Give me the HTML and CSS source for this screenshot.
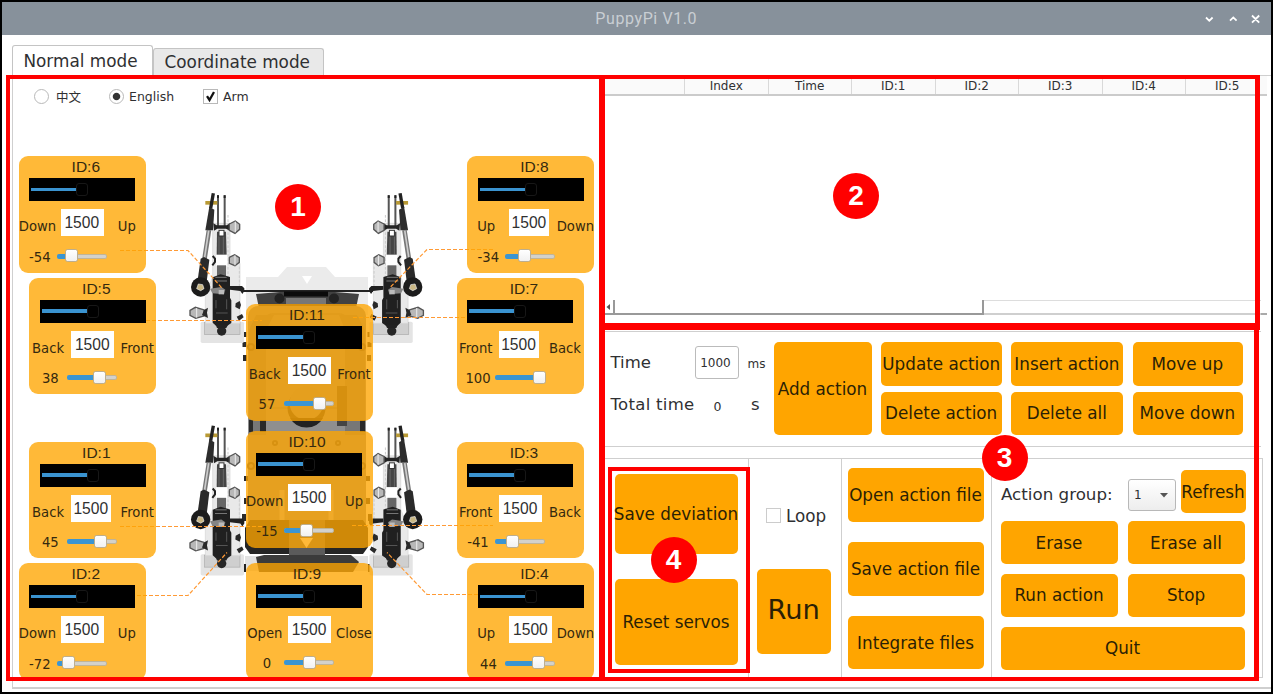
FILE: index.html
```html
<!DOCTYPE html>
<html lang="en">
<head>
<meta charset="utf-8">
<title>PuppyPi V1.0</title>
<link rel="stylesheet" href="styles.css">
</head>
<body>
<div class="window">
  <header class="titlebar">
    <span class="title">PuppyPi V1.0</span>
    <svg class="controls" width="60" height="14" viewBox="0 0 60 14">
      <path d="M4 5.5l3.3 3.3 3.3-3.3M28 8.7l3.3-3.3 3.3 3.3M50 3.500l7.200 7.200M57.200 3.500L50 10.700"/>
    </svg>
  </header>
  <nav class="tabs">
    <div class="tab active">Normal mode</div>
    <div class="tab">Coordinate mode</div>
  </nav>
  <main class="pane">
    <section class="canvas">
      <svg class="robot" width="588" height="601" viewBox="13 76 588 601">
        <defs>
          <g id="leg">
            <rect x="62" y="425" width="130" height="64" rx="5" fill="#e4e4e4"/>
            <rect x="74" y="428" width="106" height="36" fill="#cfcfcf" stroke="#aaa" stroke-width="2"/>
            <path d="M98 130h52v120h30v180H76V350l22-60z" fill="#e9e9e9" stroke="#d5d5d5" stroke-width="2"/>
            <path d="M144 105v185M178 260v60" stroke="#ccc" stroke-width="3" stroke-dasharray="8 5"/>
            <path d="M114 46v95M134 46v95" stroke="#555" stroke-width="6"/>
            <path d="M114 46v8M134 46v8" stroke="#222" stroke-width="6"/>
            <rect x="76" y="63" width="36" height="11" fill="#b99a35"/>
            <path d="M100 40l-8 45" stroke="#222" stroke-width="10"/>
            <path d="M88 80l15 9-4 62H76z" fill="#2d2d2d"/>
            <path d="M87 150l-14 90" stroke="#777" stroke-width="14"/>
            <path d="M86 152l-13 86" stroke="#ccc" stroke-width="5"/>
            <path d="M111 155h27l2 70h-30z" fill="#454545"/>
            <path d="M117 157v66M130 157v66" stroke="#777" stroke-width="2"/>
            <rect x="108" y="224" width="34" height="33" fill="#fff"/>
            <rect x="111" y="256" width="27" height="36" fill="#666"/>
            <path d="M100 130l10 6h30l10-6v22l-12-6h-26l-10 6z" fill="#242424"/>
            <rect x="117" y="151" width="15" height="17" fill="#fff" stroke="#333" stroke-width="3"/>
            <g fill="#b8b8b8" stroke="#555" stroke-width="4">
              <path d="M148 132l18-9 13 10v15l-14 12-17-9z"/>
              <path d="M148 232l16-8 14 9v14l-13 10-17-7z"/>
              <path d="M72 390l-26-8-16 9v15l17 9 25-7z"/>
            </g>
            <path d="M166 125v32M165 226v30M50 384v29" stroke="#eee" stroke-width="3"/>
            <path d="M98 228l7 8v10l-8 10" fill="none" stroke="#222" stroke-width="6"/>
            <path d="M62 236l10-5 16 8-9 75H51z" fill="#2a2a2a"/>
            <path d="M98 292l24-9 28 8v62l4 8v68l-12 8h-34l-10-9z" fill="#202020"/>
            <path d="M106 292h34M105 303h36" stroke="#777" stroke-width="3"/>
            <path d="M90 326l34-5 12 8-4 14-35-3z" fill="#858585"/>
            <path d="M116 330h16v13h-16z" fill="#bbb"/>
            <path d="M108 360v25M140 358v30M108 399h35" stroke="#555" stroke-width="3"/>
            <circle cx="62" cy="321" r="29" fill="#1c1c1c"/>
            <path d="M55 312l13 2 4 12-10 6-12-6z" fill="#c9b784" stroke="#eee" stroke-width="2"/>
            <path d="M150 318h36l7 7v8l-6 9-6-9-31-4z" fill="#202020"/>
            <path d="M72 390l12-7-3 15 3 16-18-9zM167 370l12-7 4 12-4 13-13-7zM170 410l16-8 5 10-14 10z" fill="#292929"/>
            <circle cx="125" cy="453" r="14" fill="#262626"/>
            <path d="M107 434h37l-5 10h-28z" fill="#222"/>
          </g>
        </defs>
        <!-- chassis -->
        <path d="M246 277h32l9-10h39l9 10h33v38H246z" fill="#ebebeb"/>
        <path d="M302 276h10l-5 8z" fill="#fff"/>
        <path d="M241 291h132" stroke="#222" stroke-width="2.200"/>
        <path d="M256 294l3 14h97l3-14-24-2h-55z" fill="#414141"/>
        <path d="M284 294h44" stroke="#0b0b0b" stroke-width="5"/>
        <path d="M286 301h40" stroke="#777" stroke-width="6"/>
        <circle cx="279.500" cy="298.500" r="5" fill="#222"/><circle cx="334" cy="298.500" r="5" fill="#222"/>
        <rect x="248" y="306" width="118" height="230" rx="10" fill="#8f8f8f"/>
        <path d="M249 330v105h17V330l8-15h-18zM345 330v105h20V330l-8-15h-18z" fill="#777"/>
        <path d="M249 420h4v12h-4zM260 420h6v12h-6zM360 420h5v12h-5z" fill="#292929"/>
        <path d="M244.500 332v5M369.500 332v5M244.500 342v5M369.500 342v5M245 355v6M369 355v6M246 476v5M368 476v5M246 498v6M368 498v6M244 514v7M370 514v7" stroke="#2b2b2b" stroke-width="4"/>
        <rect x="265" y="314" width="82" height="94" rx="7" fill="none" stroke="#777" stroke-width="1.500"/>
        <circle cx="306.500" cy="408" r="19" fill="#333"/>
        <circle cx="306.500" cy="403" r="17" fill="#8a8a8a"/>
        <path d="M290 418a19 19 0 0 0 33 0z" fill="#222"/>
        <path d="M337 386h10v40h-10z" fill="#444"/>
        <path d="M282 490v33M331 490v33" stroke="#bbb" stroke-width="5"/>
        <g fill="none" stroke="#4b4b4b" stroke-width="2">
          <circle cx="275" cy="443" r="2"/><circle cx="338" cy="443" r="2"/>
          <circle cx="251" cy="347" r="3"/><circle cx="362" cy="347" r="3"/>
          <circle cx="251" cy="466" r="3"/><circle cx="362" cy="466" r="3"/>
        </g>
        <rect x="245" y="556" width="123" height="15" fill="#e1e1e1"/>
        <path d="M250 520h113l5 8v19l-5 7H250l-5-7v-19z" fill="#252525"/>
        <path d="M289 520h36v40h-36z" fill="#5b5b5b"/>
        <path d="M256 557l8-2h87l8 7-6 10h-94z" fill="#3b3b3b"/>
        <path d="M300 538h13l-6.500 10z" fill="#fff"/>
        <path d="M244 564v8M370 564v8" stroke="#222" stroke-width="4"/>
        <!-- legs -->
        <use href="#leg" transform="translate(180 180) scale(.3333)"/>
        <use href="#leg" transform="translate(433.400 180) scale(-.3333 .3333)"/>
        <use href="#leg" transform="translate(180 412.500) scale(.3333)"/>
        <use href="#leg" transform="translate(433.400 412.500) scale(-.3333 .3333)"/>
        <g class="leader">
          <path d="M120 250.500h68l34 37.500M493 249.500h-66l-37 38"/>
          <path d="M146 320.500h116M353 317.500h115M120 526.500h142M352 525.500h141"/>
          <path d="M137 595.500h51l39-43M478 594.500h-51l-40-42"/>
        </g>
      </svg>

      <article class="servo s6"><h3>ID:6</h3><div class="bar"><i></i><b></b></div>
        <div class="range"><span>Down</span><div class="value">1500</div><span>Up</span></div>
        <div class="dev"><span>-54</span><div class="slider" style="--v:-54"><i></i><b></b></div></div></article>
      <article class="servo s5"><h3>ID:5</h3><div class="bar"><i></i><b></b></div>
        <div class="range"><span>Back</span><div class="value">1500</div><span>Front</span></div>
        <div class="dev"><span>38</span><div class="slider" style="--v:38"><i></i><b></b></div></div></article>
      <article class="servo s1"><h3>ID:1</h3><div class="bar"><i></i><b></b></div>
        <div class="range"><span>Back</span><div class="value narrow">1500</div><span>Front</span></div>
        <div class="dev"><span>45</span><div class="slider" style="--v:45"><i></i><b></b></div></div></article>
      <article class="servo s2"><h3>ID:2</h3><div class="bar"><i></i><b></b></div>
        <div class="range"><span>Down</span><div class="value">1500</div><span>Up</span></div>
        <div class="dev"><span>-72</span><div class="slider" style="--v:-70"><i></i><b></b></div></div></article>
      <article class="servo s8"><h3>ID:8</h3><div class="bar"><i></i><b></b></div>
        <div class="range"><span>Up</span><div class="value narrow">1500</div><span>Down</span></div>
        <div class="dev"><span>-34</span><div class="slider" style="--v:-30"><i></i><b></b></div></div></article>
      <article class="servo s7"><h3>ID:7</h3><div class="bar"><i></i><b></b></div>
        <div class="range"><span>Front</span><div class="value narrow">1500</div><span>Back</span></div>
        <div class="dev"><span>100</span><div class="slider" style="--v:100"><i></i><b></b></div></div></article>
      <article class="servo s3"><h3>ID:3</h3><div class="bar"><i></i><b></b></div>
        <div class="range"><span>Front</span><div class="value">1500</div><span>Back</span></div>
        <div class="dev"><span>-41</span><div class="slider" style="--v:-41"><i></i><b></b></div></div></article>
      <article class="servo s4"><h3>ID:4</h3><div class="bar"><i></i><b></b></div>
        <div class="range"><span>Up</span><div class="value">1500</div><span>Down</span></div>
        <div class="dev"><span>44</span><div class="slider" style="--v:44"><i></i><b></b></div></div></article>
      <article class="servo mid s11"><h3>ID:11</h3><div class="bar"><i></i><b></b></div>
        <div class="range"><span>Back</span><div class="value">1500</div><span>Front</span></div>
        <div class="dev"><span>57</span><div class="slider" style="--v:54"><i></i><b></b></div></div></article>
      <article class="servo mid s10"><h3>ID:10</h3><div class="bar"><i></i><b></b></div>
        <div class="range"><span>Down</span><div class="value">1500</div><span>Up</span></div>
        <div class="dev"><span>-15</span><div class="slider" style="--v:-14"><i></i><b></b></div></div></article>
      <article class="servo mid s9"><h3>ID:9</h3><div class="bar"><i></i><b></b></div>
        <div class="range"><span>Open</span><div class="value">1500</div><span>Close</span></div>
        <div class="dev"><span>0</span><div class="slider" style="--v:2"><i></i><b></b></div></div></article>

      <div class="options">
        <span class="radio"></span><span class="opt zh">中文</span>
        <span class="radio on"></span><span class="opt en">English</span>
        <span class="check"><svg width="15" height="15" viewBox="0 0 15 15"><path d="M4 7.200l2.500 3.800L11 3"/></svg></span><span class="opt">Arm</span>
      </div>
    </section>

    <section class="side">
      <div class="table">
        <div class="thead"><span></span><span>Index</span><span>Time</span><span>ID:1</span><span>ID:2</span><span>ID:3</span><span>ID:4</span><span>ID:5</span></div>
        <div class="tbody"></div>
        <div class="scroll">
          <div class="arrow"><svg width="5" height="6" viewBox="0 0 5 6"><path d="M4 0v6L.5 3z" fill="#555"/></svg></div>
          <div class="handle"></div><div class="track"></div><div class="end"></div>
        </div>
      </div>
      <div class="actions">
        <div class="times">
          <div class="trow"><span class="lab">Time</span><span class="field">1000</span><span class="unit">ms</span></div>
          <div class="trow second"><span class="lab">Total time</span><span class="zero">0</span><span class="sec">s</span></div>
        </div>
        <div class="btns">
          <div class="btn add">Add action</div>
          <div class="btn">Update action</div><div class="btn">Insert action</div><div class="btn">Move up</div>
          <div class="btn">Delete action</div><div class="btn">Delete all</div><div class="btn">Move down</div>
        </div>
      </div>
      <div class="bottom">
        <div class="col deviation"><div class="btn save">Save deviation</div><div class="btn reset">Reset servos</div></div>
        <div class="col runner"><div class="loop"><span class="box"></span>Loop</div><div class="btn run">Run</div></div>
        <div class="col files"><div class="btn">Open action file</div><div class="btn">Save action file</div><div class="btn">Integrate files</div></div>
        <div class="col group">
          <div class="grow"><span class="glabel">Action group:</span><span class="select">1<svg width="8" height="5" viewBox="0 0 8 5"><path d="M0 0h8L4 4.500z" fill="#555"/></svg></span><div class="btn refresh">Refresh</div></div>
          <div class="ggrid"><div class="btn">Erase</div><div class="btn">Erase all</div><div class="btn">Run action</div><div class="btn">Stop</div><div class="btn quit">Quit</div></div>
        </div>
      </div>
    </section>
  </main>

  <div class="frame f1"></div><div class="frame f2"></div><div class="frame f3"></div><div class="frame f4"></div>
  <div class="badge n1">1</div><div class="badge n2">2</div><div class="badge n3">3</div><div class="badge n4">4</div>
</div>
</body>
</html>
```
FILE: styles.css
```css
* { box-sizing: border-box; }
body { margin: 0; background: #fff; font-family: "DejaVu Sans", "Noto Sans CJK SC", sans-serif; color: #2f3032; }
.window { position: relative; width: 1272.5px; height: 694px; border: 2px solid #000; overflow: hidden; background: #fff; }

.titlebar { height: 32.5px; background: #87919b; display: flex; align-items: center; justify-content: center; position: relative; }
.title { font: 16px Roboto, sans-serif; letter-spacing: .6px; color: #c9ced3; padding: 1px 0 0 20px; }
.controls { position: absolute; right: 9px; top: 9.500px; fill: none; stroke: #fff; stroke-width: 1.800; }

.tabs { display: flex; align-items: flex-end; height: 40.5px; margin-left: 9.500px; }
.tab { border: 1px solid #c4c4c4; border-bottom: 0; border-radius: 3px 3px 0 0; height: 27.500px; width: 171.500px; background: #e9e9e9; font-size: 16.850px; line-height: 27px; text-align: center; white-space: nowrap; padding-right: 2px; }
.tab.active { height: 30.500px; width: 141px; background: #fff; line-height: 30px; padding-right: 3px; }

.pane { display: flex; height: 613.500px; margin-left: 10px; border: 1px solid #cfcfcf; border-right: 0; border-bottom-width: 2px; }

/* servo canvas */
.canvas { position: relative; width: 588px; height: 601px; overflow: hidden; flex: none; }
.robot { display: block; }
.leader path { fill: none; stroke: #ff9a35; stroke-width: 1.200; stroke-dasharray: 4 2; }
.options { position: absolute; left: 21px; top: 11.500px; display: flex; align-items: center; height: 18px; font-size: 12.500px; }
.radio { width: 15px; height: 15px; border: 1px solid #b9b9b9; border-radius: 50%; background: #fff; }
.radio.on { background: radial-gradient(circle, #333 0 3.200px, #fff 4.200px); }
.opt { margin-left: 7px; }
.opt.zh { width: 52.500px; }
.opt.en { margin-left: 5.500px; width: 74px; }
.check { width: 15px; height: 15px; border: 1px solid #b9b9b9; display: flex; align-items: center; justify-content: center; }
.check svg { flex: none; fill: none; stroke: #111; stroke-width: 2.300; }
.check + .opt { margin-left: 5px; }

.servo { position: absolute; width: 127px; height: 116.500px; border-radius: 9px; background: rgba(255, 165, 0, .78); overflow: hidden; color: #35290f; }
.servo h3 { margin: 0; height: 22px; padding-left: 7px; text-align: center; font: 15.500px/22px "Liberation Sans", sans-serif; }
.servo.mid h3 { height: 21.500px; padding: 0 5px 0 0; line-height: 21px; }
.bar { position: relative; width: 106px; height: 23px; margin-left: 10.300px; background: #000; }
.bar i { position: absolute; left: 2px; top: 9.500px; width: 45px; height: 3.500px; background: #3a93d0; }
.bar b { position: absolute; left: 47px; top: 5px; width: 12px; height: 13px; border: 1px solid #171717; border-radius: 3px; background: #000; }
.range { display: flex; height: 27px; margin-top: 8px; font-size: 13.200px; }
.range span { flex: none; display: flex; justify-content: center; width: 37.500px; line-height: 35px; white-space: nowrap; }
.range span:last-child { width: 42px; margin-left: auto; margin-right: -2px; }
.value { width: 43px; margin-left: 4.500px; background: #fff; color: #303030; font: 15.600px/27px "Liberation Sans", sans-serif; text-align: center; padding-right: 1px; }
.value.narrow { width: 40px; }
.dev { display: flex; align-items: center; height: 24px; margin-top: 9px; font-size: 13.200px; }
.dev span { width: 38px; padding-left: 4px; text-align: center; }
.slider { position: relative; width: 50px; height: 5px; border-radius: 2px; background: #d3d1cb; border: 1px solid #c0b497; margin-top: -2px; }
.slider i { position: absolute; left: -1px; top: -1px; height: 5px; width: calc(25px + var(--v) * .19px); background: #3b95d2; border-radius: 2px; }
.slider b { position: absolute; left: calc(17.500px + var(--v) * .19px); top: -5.500px; width: 13px; height: 13px; border: 1px solid #bcae90; border-radius: 2.500px; background: linear-gradient(#fff, #f1f1f1); }
.s6 { left: 5.800px; top: 80px; } .s2 { left: 5.800px; top: 487px; }
.s5 { left: 16.300px; top: 201.700px; } .s1 { left: 16.300px; top: 365.500px; }
.s8 { left: 454.400px; top: 80px; } .s4 { left: 454.400px; top: 487px; }
.s7 { left: 444px; top: 201.700px; } .s3 { left: 444px; top: 365.500px; }
.s11 { left: 233px; top: 228.300px; } .s10 { left: 233px; top: 355px; } .s9 { left: 233px; top: 487px; }

/* right side */
.side { flex: 1; padding-left: 3.500px; min-width: 0; }
.table { width: 662.500px; height: 239px; display: flex; flex-direction: column; }
.thead { display: grid; grid-template-columns: 80.500px repeat(7, 83.500px); height: 19.500px; background: #fafafa; border-bottom: 2px solid #cbcbcb; overflow: hidden; font-size: 12px; line-height: 20px; text-align: center; }
.thead span { border-right: 1px solid #d9d9d9; }
.tbody { flex: 1; }
.scroll { display: flex; height: 15px; }
.arrow { width: 10.500px; padding-left: 1px; border-right: 2px solid #999; border-bottom: 2px solid #999; display: flex; align-items: center; }
.handle { width: 369px; border-right: 2px solid #999; border-bottom: 2px solid #999; }
.track { width: 277px; border-top: 1px solid #ddd; border-bottom: 2px solid #cfcfcf; }
.end { flex: 1; border-bottom: 2px solid #aaa; }

.actions { display: flex; width: 656px; height: 116px; margin-top: 16px; border: solid #cfcfcf; border-width: 1px 0; }
.times { width: 169px; padding: 13.500px 0 0 6px; flex: none; font-size: 16.500px; }
.trow { display: flex; align-items: center; height: 34px; white-space: nowrap; }
.trow.second { margin-top: 8px; }
.lab { width: 84px; }
.trow.second .lab { width: 91px; letter-spacing: .3px; }
.field { width: 44px; height: 33px; border: 1px solid #bbb; border-radius: 3px; font-size: 12px; line-height: 32px; text-align: center; padding-right: 2px; }
.unit { font-size: 12px; margin-left: 9px; padding-top: 2px; }
.zero { width: 30px; padding-left: 12px; font-size: 12.500px; padding-top: 4px; }
.sec { margin-left: 19.500px; }
.btn { display: flex; align-items: center; justify-content: center; background: #ffa500; border-radius: 5px; color: #2b1f05; font-size: 16.800px; white-space: nowrap; min-width: 0; padding-right: .5px; }
.btns { display: grid; grid-template-columns: 98.500px 120.500px 112.500px 110px; grid-template-rows: 43.500px 43.500px; gap: 6px 9.200px; padding-top: 10px; }
.add { grid-row: span 2; }

.bottom { display: flex; width: 658.500px; height: 220px; margin-top: 11px; border: solid #cfcfcf; border-width: 1px 1px 1px 0; }
.col { display: flex; flex-direction: column; flex: none; border-right: 1px solid #cfcfcf; }
.deviation { width: 144px; padding: 14.500px 10px 0 10.500px; }
.save { height: 80px; }
.reset { height: 85.500px; margin-top: 25.500px; }
.runner { width: 93px; padding: 46.500px 9.500px 0 8.500px; }
.loop { display: flex; align-items: center; height: 20px; padding-left: 9px; font-size: 16.800px; }
.box { width: 15px; height: 15px; border: 1px solid #ccc; margin-right: 5px; }
.run { height: 85px; margin-top: 43px; font-size: 27.300px; padding-bottom: 3px; }
.files { width: 150px; padding: 9px 7px 0 6.500px; gap: 19.900px; }
.files .btn { height: 53.900px; }
.group { flex: 1; border-right: 0; padding: 11px 16.500px 0 9.500px; }
.grow { display: flex; height: 43px; font-size: 16.700px; }
.glabel { width: 127px; line-height: 49px; white-space: nowrap; }
.select { width: 48px; height: 32px; margin-top: 9px; padding: 0 7px 0 5px; border: 1px solid #b8b8b8; border-radius: 3px; background: linear-gradient(#fff, #ededed); display: flex; align-items: center; justify-content: space-between; font-size: 12px; }
.refresh { width: 64.500px; flex: none; margin-left: 5px; }
.ggrid { display: grid; grid-template-columns: 116.500px 116.500px; grid-auto-rows: 43px; gap: 9.800px 10.500px; margin-top: 8px; }
.quit { grid-column: span 2; }

/* callouts over the window */
.frame { position: absolute; border: 4px solid #f00; }
.f1 { left: 4px; top: 73px; width: 598.500px; height: 606px; border-width: 4px 6px 4px 4px; }
.f2 { left: 598px; top: 73px; width: 660px; height: 255px; border-width: 4px 5px 7px 5px; }
.f3 { left: 598px; top: 321px; width: 659px; height: 358px; border-width: 7px 5px 4px 5px; }
.f4 { left: 606px; top: 465px; width: 141.500px; height: 206px; border-width: 4.500px; }
.badge { position: absolute; width: 46px; height: 46px; border-radius: 50%; background: #f00; color: #fff; text-align: center; font: bold 28px/46px "Liberation Sans", sans-serif; }
.n1 { left: 273px; top: 182px; } .n2 { left: 831px; top: 170.500px; } .n3 { left: 979.500px; top: 432.500px; } .n4 { left: 648.500px; top: 535px; }
```
